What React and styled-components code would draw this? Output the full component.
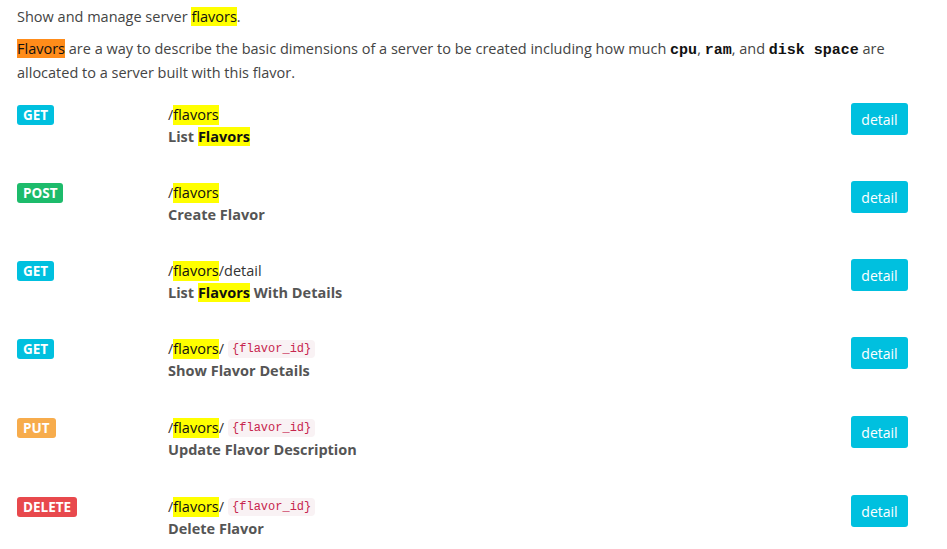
import React from "react"
import styled, { createGlobalStyle } from "styled-components"

const GlobalStyle = createGlobalStyle`
  html, body {
    margin: 0;
    padding: 0;
    background: #fff;
  }
  body {
    font-family: "Open Sans", "Noto Sans", sans-serif;
    font-size: 14.5px;
    color: #333;
  }
`

const Page = styled.div`
  padding: 5px 39px 0 17px;
`

const Para = styled.p`
  margin: 0 0 8px;
  line-height: 24px;
  color: #444;
`

const Mark = styled.span`
  background: ${(p) => (p.$orange ? "#ff8c1a" : "#ffff00")};
  color: #111;
`

const Kbd = styled.code`
  font-family: "Liberation Mono", "Courier New", monospace;
  font-weight: bold;
  font-size: 15px;
  line-height: 1;
  color: #111;
`

const List = styled.div`
  margin-top: 18px;
  display: flex;
  flex-direction: column;
`

const Row = styled.div`
  display: grid;
  grid-template-columns: 151px 1fr auto;
  align-items: start;
  height: ${(p) => p.$h || 78}px;
`

const Badge = styled.span`
  justify-self: start;
  margin-top: 2px;
  padding: 0 6px;
  height: 20px;
  line-height: 20px;
  border-radius: 3px;
  font-weight: bold;
  font-size: 13.5px;
  color: #fff;
  background: ${(p) => p.$color};
`

const Info = styled.div`
  display: flex;
  flex-direction: column;
  padding-top: 2px;
`

const Path = styled.div`
  line-height: 20px;
  color: #333;
  display: flex;
  align-items: center;
`

const Param = styled.code`
  margin-left: 4px;
  padding: 0 4px;
  font-family: "Liberation Mono", "DejaVu Sans Mono", monospace;
  font-size: 12px;
  line-height: 18px;
  color: #c7254e;
  background: #f9f2f4;
  border-radius: 4px;
`

const Title = styled.div`
  margin-top: 2px;
  line-height: 20px;
  font-weight: bold;
  color: #555;
`

const Button = styled.button`
  width: 57px;
  height: 32px;
  border: none;
  border-radius: 3px;
  background: #00c0df;
  color: #fff;
  font-family: inherit;
  font-size: 14px;
  padding: 0;
  cursor: pointer;
`

const colors = {
  GET: "#00c0df",
  POST: "#1dbb6b",
  PUT: "#f7ac4c",
  DELETE: "#e8494d",
}

const endpoints = [
  { method: "GET", path: "", title: <>List <Mark>Flavors</Mark></> },
  { method: "POST", path: "", title: "Create Flavor" },
  { method: "GET", path: "detail", title: <>List <Mark>Flavors</Mark> With Details</> },
  { method: "GET", param: true, title: "Show Flavor Details", h: 79 },
  { method: "PUT", param: true, title: "Update Flavor Description", h: 79 },
  { method: "DELETE", param: true, title: "Delete Flavor" },
]

export default function App() {
  return (
    <>
      <GlobalStyle />
      <Page>
        <Para>
          Show and manage server <Mark>flavors</Mark>.
        </Para>
        <Para>
          <Mark $orange>Flavors</Mark> are a way to describe the basic dimensions of a server to be
          created including how much <Kbd>cpu</Kbd>, <Kbd>ram</Kbd>, and <Kbd>disk space</Kbd> are
          allocated to a server built with this flavor.
        </Para>
        <List>
          {endpoints.map((e, i) => (
            <Row key={i} $h={e.h}>
              <Badge $color={colors[e.method]}>{e.method}</Badge>
              <Info>
                <Path>
                  /<Mark>flavors</Mark>
                  {e.path ? "/" + e.path : e.param ? "/" : ""}
                  {e.param && <Param>{"{flavor_id}"}</Param>}
                </Path>
                <Title>{e.title}</Title>
              </Info>
              <Button>detail</Button>
            </Row>
          ))}
        </List>
      </Page>
    </>
  )
}
